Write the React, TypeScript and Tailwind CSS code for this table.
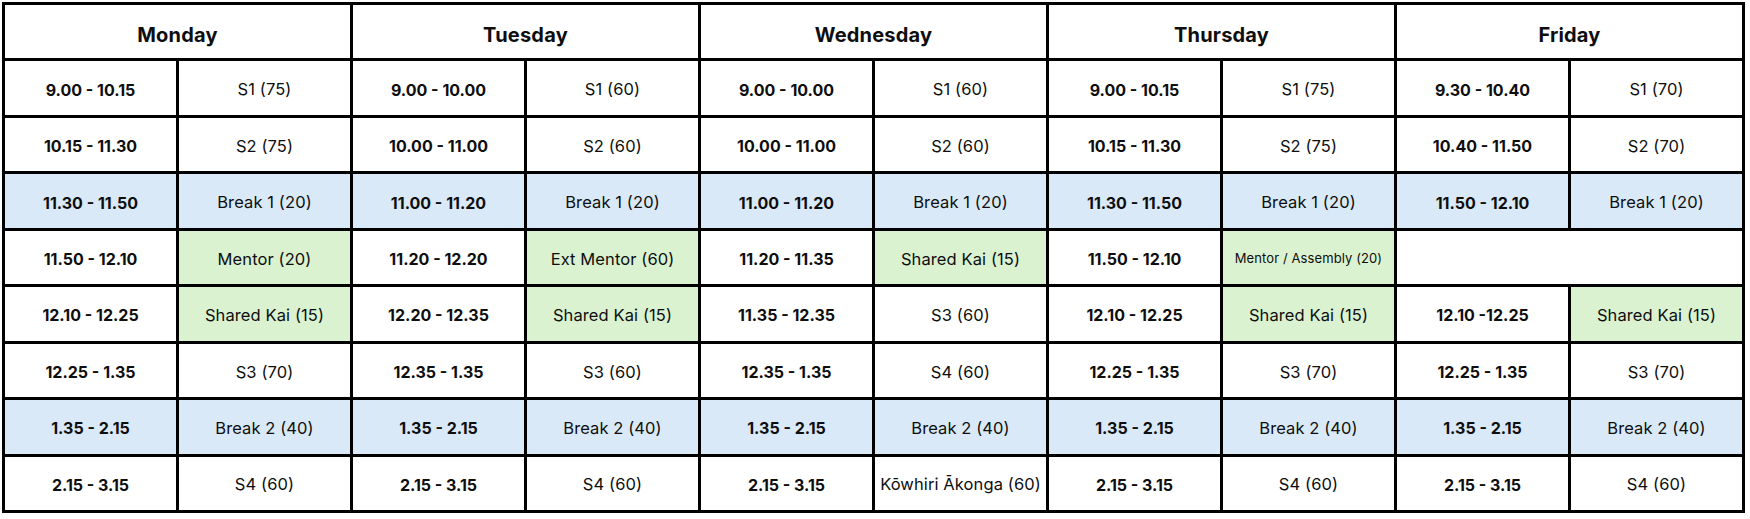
type Slot = { time: string; label: string; kind?: 'break' | 'green'; small?: boolean } | null;

const DAYS: { name: string; slots: Slot[] }[] = [
  {
    name: 'Monday',
    slots: [
      { time: '9.00 - 10.15', label: 'S1 (75)' },
      { time: '10.15 - 11.30', label: 'S2 (75)' },
      { time: '11.30 - 11.50', label: 'Break 1 (20)', kind: 'break' },
      { time: '11.50 - 12.10', label: 'Mentor (20)', kind: 'green' },
      { time: '12.10 - 12.25', label: 'Shared Kai (15)', kind: 'green' },
      { time: '12.25 - 1.35', label: 'S3 (70)' },
      { time: '1.35 - 2.15', label: 'Break 2 (40)', kind: 'break' },
      { time: '2.15 - 3.15', label: 'S4 (60)' },
    ],
  },
  {
    name: 'Tuesday',
    slots: [
      { time: '9.00 - 10.00', label: 'S1 (60)' },
      { time: '10.00 - 11.00', label: 'S2 (60)' },
      { time: '11.00 - 11.20', label: 'Break 1 (20)', kind: 'break' },
      { time: '11.20 - 12.20', label: 'Ext Mentor (60)', kind: 'green' },
      { time: '12.20 - 12.35', label: 'Shared Kai (15)', kind: 'green' },
      { time: '12.35 - 1.35', label: 'S3 (60)' },
      { time: '1.35 - 2.15', label: 'Break 2 (40)', kind: 'break' },
      { time: '2.15 - 3.15', label: 'S4 (60)' },
    ],
  },
  {
    name: 'Wednesday',
    slots: [
      { time: '9.00 - 10.00', label: 'S1 (60)' },
      { time: '10.00 - 11.00', label: 'S2 (60)' },
      { time: '11.00 - 11.20', label: 'Break 1 (20)', kind: 'break' },
      { time: '11.20 - 11.35', label: 'Shared Kai (15)', kind: 'green' },
      { time: '11.35 - 12.35', label: 'S3 (60)' },
      { time: '12.35 - 1.35', label: 'S4 (60)' },
      { time: '1.35 - 2.15', label: 'Break 2 (40)', kind: 'break' },
      { time: '2.15 - 3.15', label: 'Kōwhiri Ākonga (60)' },
    ],
  },
  {
    name: 'Thursday',
    slots: [
      { time: '9.00 - 10.15', label: 'S1 (75)' },
      { time: '10.15 - 11.30', label: 'S2 (75)' },
      { time: '11.30 - 11.50', label: 'Break 1 (20)', kind: 'break' },
      { time: '11.50 - 12.10', label: 'Mentor / Assembly (20)', kind: 'green', small: true },
      { time: '12.10 - 12.25', label: 'Shared Kai (15)', kind: 'green' },
      { time: '12.25 - 1.35', label: 'S3 (70)' },
      { time: '1.35 - 2.15', label: 'Break 2 (40)', kind: 'break' },
      { time: '2.15 - 3.15', label: 'S4 (60)' },
    ],
  },
  {
    name: 'Friday',
    slots: [
      { time: '9.30 - 10.40', label: 'S1 (70)' },
      { time: '10.40 - 11.50', label: 'S2 (70)' },
      { time: '11.50 - 12.10', label: 'Break 1 (20)', kind: 'break' },
      null,
      { time: '12.10 -12.25', label: 'Shared Kai (15)', kind: 'green' },
      { time: '12.25 - 1.35', label: 'S3 (70)' },
      { time: '1.35 - 2.15', label: 'Break 2 (40)', kind: 'break' },
      { time: '2.15 - 3.15', label: 'S4 (60)' },
    ],
  },
];

const cell = 'flex items-center justify-center text-center';

export default function App() {
  const rows = [0, 1, 2, 3, 4, 5, 6, 7];

  return (
    <div className="min-h-screen bg-white pt-[2px] pl-[2px] text-[#0e0e0e]" style={{ fontFamily: 'Inter, "Open Sans", sans-serif' }}>
      <div className="grid h-[511px] w-[1743px] grid-cols-[repeat(10,171px)] grid-rows-9 gap-[3px] border-[3px] border-black bg-black">
        {/* Day headers */}
        {DAYS.map(day => (
          <div key={day.name} className={`${cell} col-span-2 bg-white pt-[7px] text-[20px] font-bold tracking-[0.2px]`}>
            {day.name}
          </div>
        ))}

        {/* Slot rows */}
        {rows.map(r =>
          DAYS.map(day => {
            const slot = day.slots[r];
            if (!slot) {
              return <div key={day.name + r} className="col-span-2 bg-white" />;
            }
            const timeBg = slot.kind === 'break' ? 'bg-[#dae9f8]' : 'bg-white';
            const labelBg =
              slot.kind === 'break' ? 'bg-[#dae9f8]' : slot.kind === 'green' ? 'bg-[#daf2d0]' : 'bg-white';
            return [
              <div key={day.name + r + 't'} className={`${cell} ${timeBg} pt-[3px] text-[16px] font-bold`}>
                {slot.time}
              </div>,
              <div
                key={day.name + r + 'l'}
                className={`${cell} ${labelBg} pt-[3px] ${slot.small ? 'text-[13px]' : 'text-[16.5px]'} tracking-[0.1px]`}
              >
                {slot.label}
              </div>,
            ];
          })
        )}
      </div>
    </div>
  );
}
